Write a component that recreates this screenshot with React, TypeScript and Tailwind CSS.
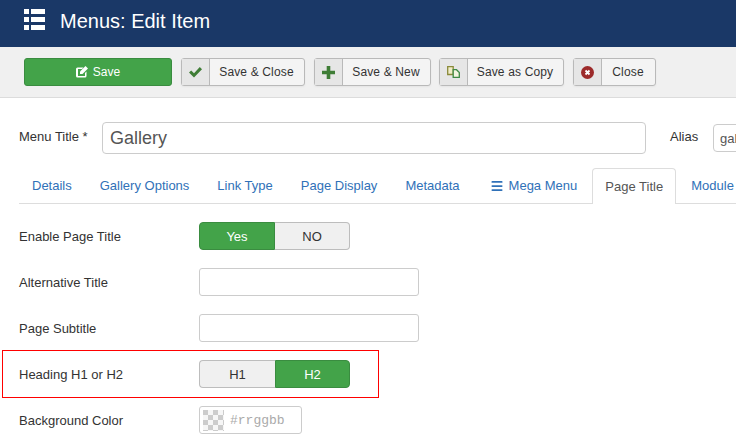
import { Menu } from 'lucide-react';
import type { ReactNode } from 'react';

function ToolButton({ icon, label, width }: { icon: ReactNode; label: string; width: string }) {
  return (
    <button className={`flex h-7 ${width} items-stretch rounded-[3px] border border-[#b9b9b9] bg-[#f4f4f4] text-[#333] shadow-[0_1px_2px_rgba(0,0,0,0.05)]`}>
      <span className="flex w-[28px] shrink-0 items-center justify-center border-r border-[#b9b9b9] bg-[#e6e6e6]">{icon}</span>
      <span className="flex flex-1 items-center justify-center pr-px tracking-[0.15px]">{label}</span>
    </button>
  );
}

function Toggle({ left, right, active }: { left: string; right: string; active: 'left' | 'right' }) {
  const on = 'bg-[#43a349] text-white border border-[#3a8c40]';
  const off = 'bg-[#f0f0f0] text-[#333] border border-[#bdbdbd]';
  return (
    <div className="flex h-7 w-[151px]">
      <span className={`flex w-[76px] items-center justify-center rounded-l-[4px] ${active === 'left' ? on : off} ${active === 'left' ? '' : 'border-r-0'}`}>{left}</span>
      <span className={`flex w-[75px] items-center justify-center rounded-r-[4px] ${active === 'right' ? on : off} ${active === 'right' ? '' : 'border-l-0'}`}>{right}</span>
    </div>
  );
}

function Row({ label, children }: { label: string; children: ReactNode }) {
  return (
    <div className="flex h-7 items-center">
      <span className="w-[180px] shrink-0 text-[#333]">{label}</span>
      {children}
    </div>
  );
}

const tabs = [
  { label: 'Details', ml: 'ml-[13px]' },
  { label: 'Gallery Options', ml: 'ml-[28px]' },
  { label: 'Link Type', ml: 'ml-[28px]' },
  { label: 'Page Display', ml: 'ml-[28px]' },
  { label: 'Metadata', ml: 'ml-[28px]' },
];

export default function App() {
  return (
    <div className="h-[437px] w-[736px] overflow-hidden bg-white font-['Liberation_Sans',Arial,sans-serif] text-[13px] leading-none">
      {/* Header */}
      <header className="flex h-[47px] items-center bg-[#1a3867] pl-6 text-white">
        <svg width="21" height="21" viewBox="0 0 21 21" fill="currentColor" className="mb-[8px]">
          <path d="M0 0h5v5H0zM7 0h14v5H7zM0 8h5v5H0zM7 8h14v5H7zM0 16h5v5H0zM7 16h14v5H7z" />
        </svg>
        <h1 className="mb-[5px] ml-[15px] text-[20px]">Menus: Edit Item</h1>
      </header>

      {/* Toolbar */}
      <div className="flex h-[51px] items-center border-b border-[#dcdcdc] bg-[#f0f0f0] pl-6 text-[12px]">
        <button className="flex h-7 w-[148px] items-center justify-center gap-[5px] rounded-[3px] border border-[#3a8c40] bg-[#43a349] text-white">
          <svg width="12" height="12" viewBox="0 0 12 12" fill="currentColor">
            <path d="M1.5 1.5h6L6 3H2v7h7V7l1.5-1.5V10a1.5 1.5 0 0 1-1.5 1.5H1.500A1.5 1.5 0 0 1 0 10V3a1.5 1.5 0 0 1 1.5-1.5z" />
            <path d="M9.5 0 12 2.5 6.500 8H4V5.500z" />
          </svg>
          Save
        </button>
        <div className="ml-[9px]">
          <ToolButton
            label="Save & Close"
            width="w-[124px]"
            icon={
              <svg width="13" height="11" viewBox="0 0 13 11" fill="#3f7d36">
                <path d="M0 5.600 2.200 3.400 5 6.200 10.800 0 13 2.200 5 10.600z" />
              </svg>
            }
          />
        </div>
        <div className="ml-[9px]">
          <ToolButton
            label="Save & New"
            width="w-[117px]"
            icon={
              <svg width="13" height="13" viewBox="0 0 13 13" fill="#3f7d36">
                <path d="M4.700 0h3.600v4.700H13v3.600H8.300V13H4.700V8.300H0V4.700h4.700z" />
              </svg>
            }
          />
        </div>
        <div className="ml-[8px]">
          <ToolButton
            label="Save as Copy"
            width="w-[125px]"
            icon={
              <svg width="13" height="12" viewBox="0 0 13 12" fill="none" strokeWidth="1.300">
                <path d="M.7.7h5.500v7.800H.7z" fill="#f0ecc8" stroke="#8a8a3a" />
                <path d="M6.200 3.700h3.300l2.800 2.800v4.800H6.200z" fill="#f4f4e0" stroke="#3f8a45" />
              </svg>
            }
          />
        </div>
        <div className="ml-[9px]">
          <ToolButton
            label="Close"
            width="w-[83px]"
            icon={
              <svg width="13" height="13" viewBox="0 0 13 13">
                <circle cx="6.500" cy="6.500" r="6.500" fill="#9c2a2a" />
                <path d="M4.500 4.500l4 4M8.500 4.500l-4 4" stroke="#fff" strokeWidth="1.800" />
              </svg>
            }
          />
        </div>
      </div>

      {/* Title row */}
      <div className="mt-6 flex items-start pl-[19px]">
        <label className="mt-[8px] w-[83px] shrink-0 text-[#333]">Menu Title *</label>
        <div className="flex h-8 w-[544px] shrink-0 items-center rounded-[4px] border border-[#ccc] pl-[7px] text-[18px] text-[#555]">Gallery</div>
        <label className="ml-6 mt-[8px] w-[43px] shrink-0 text-[#333]">Alias</label>
        <div className="mt-[2px] flex h-[28px] w-[60px] shrink-0 items-center rounded-[4px] border border-[#ccc] pl-[6px] text-[#555]">gallery</div>
      </div>

      {/* Tabs */}
      <nav className="ml-[19px] mt-[14px] flex h-[36px] items-stretch border-b border-[#ddd] text-[#3071b8]">
        {tabs.map((tab) => (
          <span key={tab.label} className={`flex shrink-0 items-center whitespace-nowrap ${tab.ml}`}>
            {tab.label}
          </span>
        ))}
        <span className="ml-[30px] flex shrink-0 items-center whitespace-nowrap">
          <Menu size={14} strokeWidth={3} className="mr-[5px]" />
          Mega Menu
        </span>
        <span className="relative -mb-px ml-[15px] flex w-[84px] shrink-0 items-center justify-center rounded-t-[4px] border border-b-0 border-[#ddd] bg-white text-[#555]">Page Title</span>
        <span className="ml-[15px] flex shrink-0 items-center whitespace-nowrap">Module</span>
      </nav>

      {/* Form */}
      <div className="mt-[18px] flex flex-col gap-[18px] pl-[19px]">
        <Row label="Enable Page Title">
          <Toggle left="Yes" right="NO" active="left" />
        </Row>
        <Row label="Alternative Title">
          <div className="h-7 w-[220px] rounded-[3px] border border-[#ccc]" />
        </Row>
        <Row label="Page Subtitle">
          <div className="h-7 w-[220px] rounded-[3px] border border-[#ccc]" />
        </Row>
        <div className="-mx-[17px] -my-[10px] w-[377px] border border-[#f00] py-[9px] pl-[16px]">
          <Row label="Heading H1 or H2">
            <Toggle left="H1" right="H2" active="right" />
          </Row>
        </div>
        <Row label="Background Color">
          <div className="flex h-7 w-[103px] items-center rounded-[3px] border border-[#ccc] pl-[3px]">
            <span className="h-[21px] w-[21px] bg-[length:10px_10px] bg-[conic-gradient(#f6f6f6_25%,#cccccc_0_50%,#f6f6f6_0_75%,#cccccc_0)]" />
            <span className="ml-[6px] font-['Liberation_Mono',monospace] text-[13px] text-[#aaa]">#rrggbb</span>
          </div>
        </Row>
      </div>
    </div>
  );
}
